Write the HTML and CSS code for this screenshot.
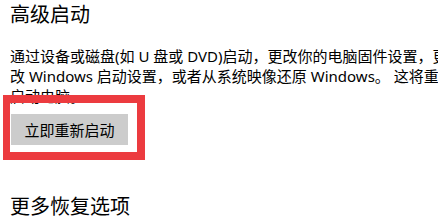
FILE: index.html
```html
<!DOCTYPE html>
<html lang="zh-CN">
<head>
  <meta charset="UTF-8" />
  <meta name="viewport" content="width=device-width, initial-scale=1.0"/>
  <title>恢复</title>
  <link rel="stylesheet" href="styles.css">
</head>
<body>

  <section class="recovery">
    <h2 class="section-title">高级启动</h2>
    <p class="section-desc">
      <span class="line">通过设备或磁盘(如 U 盘或 DVD)启动，更改你的电脑固件设置，更</span>
      <span class="line">改 Windows 启动设置，或者从系统映像还原 Windows。 这将重新</span>
      <span class="line">启动电脑。</span>
    </p>
    <div class="action">
      <button class="restart-btn">立即重新启动</button>
      <!-- annotation box drawn over the button -->
      <div class="highlight"></div>
    </div>

    <h2 class="section-title more">更多恢复选项</h2>
  </section>

</body>
</html>
```

FILE: styles.css
```css
* {
  box-sizing: border-box;
}

html, body {
  overflow: hidden;
}

body {
  margin: 0;
  padding: 0 0 0 10px;
  background: #fff;
  color: #000;
  font-family: "Noto Sans", "Noto Sans CJK SC", sans-serif;
}

.recovery {
  width: 700px;
}

.section-title {
  margin: 1px 0 0;
  font-size: 20px;
  font-weight: normal;
  line-height: 28px;
}

.section-desc {
  margin: 17px 0 0;
  font-size: 15px;
  line-height: 20px;
  white-space: nowrap;
}

.section-desc .line {
  display: block;
}

.action {
  position: relative;
  margin-top: 8px;
}

.restart-btn {
  display: block;
  width: 117px;
  height: 31px;
  margin-left: 1px;
  padding: 0;
  border: none;
  background: #cccccc;
  color: #000;
  font-family: inherit;
  font-size: 15px;
}

.highlight {
  position: absolute;
  left: -7px;
  top: -19px;
  width: 142px;
  height: 65px;
  border: 7px solid #ec3b3f;
  border-width: 8px 8px 8px 7px;
}

.section-title.more {
  margin-top: 48px;
}
```
